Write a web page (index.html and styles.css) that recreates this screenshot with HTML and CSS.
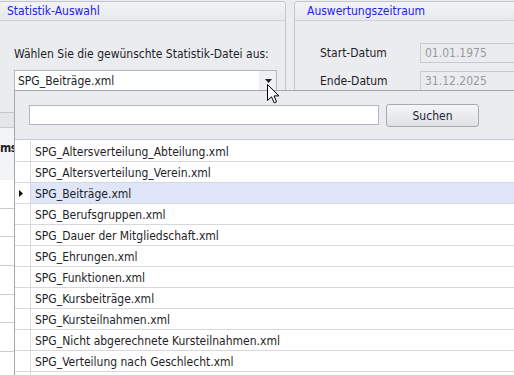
FILE: index.html
```html
<!DOCTYPE html>
<html lang="de">
<head>
<meta charset="utf-8">
<title>Statistik</title>
<link rel="stylesheet" href="styles.css">
</head>
<body>
<div class="screen">
  <div class="groups">
    <section class="group g1">
      <div class="gh">Statistik-Auswahl</div>
      <div class="gb">
        <div class="prompt">Wählen Sie die gewünschte Statistik-Datei aus:</div>
        <div class="combo">
          <span class="combo-text">SPG_Beiträge.xml</span>
          <span class="combo-btn"><svg width="7" height="4" viewBox="0 0 7 4"><path d="M0 0H7L3.5 4Z" fill="#222"/></svg></span>
        </div>
      </div>
    </section>
    <section class="group g2">
      <div class="gh">Auswertungszeitraum</div>
      <div class="gb">
        <div class="drow"><span class="dlabel">Start-Datum</span><span class="dfield">01.01.1975</span></div>
        <div class="drow"><span class="dlabel">Ende-Datum</span><span class="dfield">31.12.2025</span></div>
      </div>
    </section>
  </div>
  <div class="band"></div>
  <div class="grid">
    <div class="grid-head"><div class="ghcell">ms</div></div>
    <div class="grow"></div>
    <div class="grow"></div>
    <div class="grow"></div>
    <div class="grow"></div>
    <div class="grow"></div>
    <div class="grow"></div>
    <div class="grow"></div>
  </div>

  <div class="popup">
    <div class="search">
      <div class="sinput"></div>
      <div class="sbtn">Suchen</div>
    </div>
    <div class="list">
      <div class="item"><span class="ind"></span><span class="txt">SPG_Altersverteilung_Abteilung.xml</span></div>
      <div class="item"><span class="ind"></span><span class="txt">SPG_Altersverteilung_Verein.xml</span></div>
      <div class="item sel"><span class="ind"><svg width="4" height="7" viewBox="0 0 4 7"><path d="M0 0L4 3.5L0 7Z" fill="#111"/></svg></span><span class="txt">SPG_Beiträge.xml</span></div>
      <div class="item"><span class="ind"></span><span class="txt">SPG_Berufsgruppen.xml</span></div>
      <div class="item"><span class="ind"></span><span class="txt">SPG_Dauer der Mitgliedschaft.xml</span></div>
      <div class="item"><span class="ind"></span><span class="txt">SPG_Ehrungen.xml</span></div>
      <div class="item"><span class="ind"></span><span class="txt">SPG_Funktionen.xml</span></div>
      <div class="item"><span class="ind"></span><span class="txt">SPG_Kursbeiträge.xml</span></div>
      <div class="item"><span class="ind"></span><span class="txt">SPG_Kursteilnahmen.xml</span></div>
      <div class="item"><span class="ind"></span><span class="txt">SPG_Nicht abgerechnete Kursteilnahmen.xml</span></div>
      <div class="item"><span class="ind"></span><span class="txt">SPG_Verteilung nach Geschlecht.xml</span></div>
      <div class="item"><span class="ind"></span><span class="txt"></span></div>
    </div>
  </div>

  <svg class="cursor" width="13" height="20" viewBox="0 0 13 20">
    <path d="M0.5 0.5V16.5L4.5 12.8L7.2 18.9L9.6 17.9L7 11.9H12Z" fill="#fff" stroke="#000" stroke-width="1" stroke-linejoin="miter"/>
  </svg>
</div>
</body>
</html>
```

FILE: styles.css
```css
* { box-sizing: border-box; }
html, body { margin: 0; padding: 0; }
body {
  width: 514px;
  height: 375px;
  overflow: hidden;
  background: #ebecef;
  font-family: "DejaVu Sans Condensed", "DejaVu Sans", sans-serif;
  font-stretch: condensed;
  font-size: 11px;
  color: #1e1e28;
}
.screen {
  position: relative;
  width: 514px;
  height: 375px;
  overflow: hidden;
}
.groups {
  display: flex;
  padding-top: 1px;
  height: 113px;
}
.group {
  border: 1px solid #c4c6cc;
  border-radius: 3px;
  background: #ebecef;
  height: 112px;
}
.g1 {
  margin-left: -5px;
  width: 291px;
  flex: none;
}
.g2 {
  margin-left: 8px;
  flex: 1;
  margin-right: -10px;
}
.gh {
  height: 19px;
  line-height: 19px;
  border-bottom: 1px solid #d1d3d8;
  background: linear-gradient(#f2f3f5, #e8e9ec);
  color: #2222ee;
  font-size: 12px;
  border-radius: 3px 3px 0 0;
}
.g1 .gh { padding-left: 11px; }
.g2 .gh { padding-left: 12px; }
.g1 .gb { padding: 26px 0 0 18px; }
.prompt {
  height: 14px;
  line-height: 14px;
  font-size: 12px;
}
.combo {
  margin-top: 9px;
  width: 263px;
  height: 21px;
  border: 1px solid #b4b6bc;
  background: #fff;
  display: flex;
  align-items: center;
  justify-content: space-between;
  font-size: 12px;
}
.combo-text { padding-left: 3px; }
.combo-btn {
  width: 17px;
  height: 19px;
  background: #eef0f3;
  display: flex;
  align-items: center;
  justify-content: center;
  padding-left: 1px;
}
.g2 .gb { padding: 22px 0 0 25px; }
.drow {
  display: flex;
  align-items: center;
  height: 20px;
  margin-bottom: 8px;
  font-size: 12px;
}
.dlabel { width: 100px; }
.dfield {
  flex: 1;
  height: 20px;
  line-height: 18px;
  border: 1px solid #c9cbd0;
  background: #ebecef;
  color: #9a9a9e;
  padding-left: 4px;
}
.band {
  height: 15px;
  background: #e5e6ea;
  border-bottom: 1px solid #c9cbd0;
}
.grid { background: #fff; }
.grid-head {
  height: 52px;
  background: #f3f4f6;
  display: flex;
  align-items: center;
  padding-bottom: 12px;
}
.ghcell {
  width: 15px;
  text-align: right;
  font-weight: bold;
  font-size: 12px;
  letter-spacing: -0.5px;
}
.grow {
  height: 28.7px;
  border-bottom: 1px solid #c9cbd0;
}

.popup {
  position: absolute;
  left: 14px;
  top: 90px;
  width: 520px;
  height: 300px;
  border-left: 1px solid #a4a6ac;
  border-top: 1px solid #a4a6ac;
  background: #ebecef;
}
.search {
  height: 49px;
  display: flex;
  align-items: flex-start;
  padding: 13px 0 0 14px;
  border-bottom: 1px solid #c6c8cd;
}
.sinput {
  width: 350px;
  height: 20px;
  margin-top: 1px;
  border: 1px solid #b4b6bc;
  background: #fff;
}
.sbtn {
  margin-left: 7px;
  width: 93px;
  height: 23px;
  border: 1px solid #a8aab0;
  border-radius: 3px;
  background: linear-gradient(#f5f5f7, #e0e1e5);
  display: flex;
  align-items: center;
  justify-content: center;
  font-size: 12px;
  color: #1e1e30;
}
.list {
  background: #fff;
  padding-top: 1px;
  height: 260px;
}
.item {
  display: flex;
  height: 21px;
  border-bottom: 1px solid #d7d8dd;
  font-size: 12px;
}
.ind {
  width: 16px;
  border-right: 1px solid #d7d8dd;
  display: flex;
  align-items: center;
  padding-left: 4px;
}
.txt {
  flex: 1;
  padding-left: 4px;
  padding-top: 1px;
  line-height: 20px;
}
.item.sel .txt { background: #dee6f8; }
.cursor {
  position: absolute;
  left: 267px;
  top: 84px;
}
```
